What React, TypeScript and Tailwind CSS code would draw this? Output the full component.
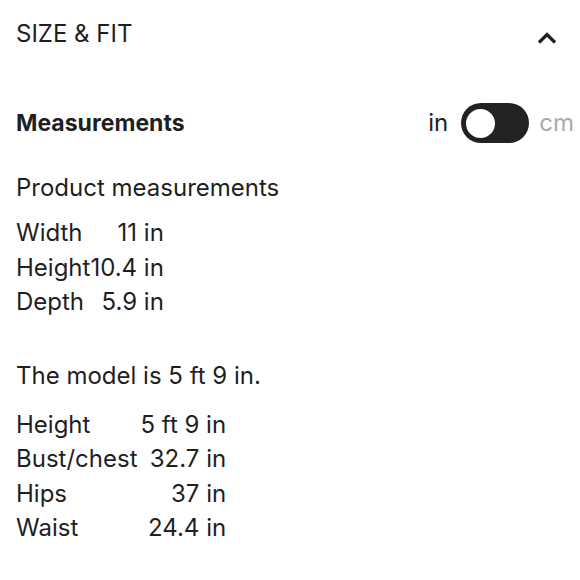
import React from 'react';

const PRODUCT = [
  ['Width', '11 in'],
  ['Height', '10.4 in'],
  ['Depth', '5.9 in'],
];

const MODEL = [
  ['Height', '5 ft 9 in'],
  ['Bust/chest', '32.7 in'],
  ['Hips', '37 in'],
  ['Waist', '24.4 in'],
];

function MeasureTable({ rows, gap }: { rows: string[][]; gap?: boolean }) {
  return (
    <table className="border-collapse text-[24px] leading-[34.5px]">
      <tbody>
        {rows.map(([label, value]) => (
          <tr key={label}>
            <td className={gap ? 'p-0 pr-[3px]' : 'p-0'}>{label}</td>
            <td className="p-0 text-right">{value}</td>
          </tr>
        ))}
      </tbody>
    </table>
  );
}

export default function App() {
  return (
    <div className="w-[580px] h-[580px] bg-white text-[#1f1f1f] font-['Inter',sans-serif] px-4 overflow-hidden">
      <div className="flex items-center justify-between pt-[16px] h-[52px]">
        <span className="text-[24px]">SIZE &amp; FIT</span>
        <svg width="22" height="15" viewBox="0 0 22 15" className="mr-[6px] mt-[6px]">
          <path d="M3 12.5 L11 4.5 L19 12.5" fill="none" stroke="#1f1f1f" strokeWidth="3.2" />
        </svg>
      </div>

      <div className="flex items-center justify-between mt-[51px]">
        <span className="text-[23px] font-bold">Measurements</span>
        <div className="flex items-center -mr-[10px]">
          <span className="text-[24px]">in</span>
          <div className="ml-[13px] w-[68px] h-[40px] rounded-full bg-[#222] flex items-center pl-[5px]">
            <div className="w-[29px] h-[29px] rounded-full bg-white" />
          </div>
          <span className="ml-[10px] text-[24px] text-[#aaa]">cm</span>
        </div>
      </div>

      <p className="text-[24px] mt-[30px] leading-[30px]">Product measurements</p>
      <div className="mt-[13px]">
        <MeasureTable rows={PRODUCT} />
      </div>

      <p className="text-[24px] mt-[41px] leading-[30px]">The model is 5 ft 9 in.</p>
      <div className="mt-[17px]">
        <MeasureTable rows={MODEL} gap />
      </div>
    </div>
  );
}
